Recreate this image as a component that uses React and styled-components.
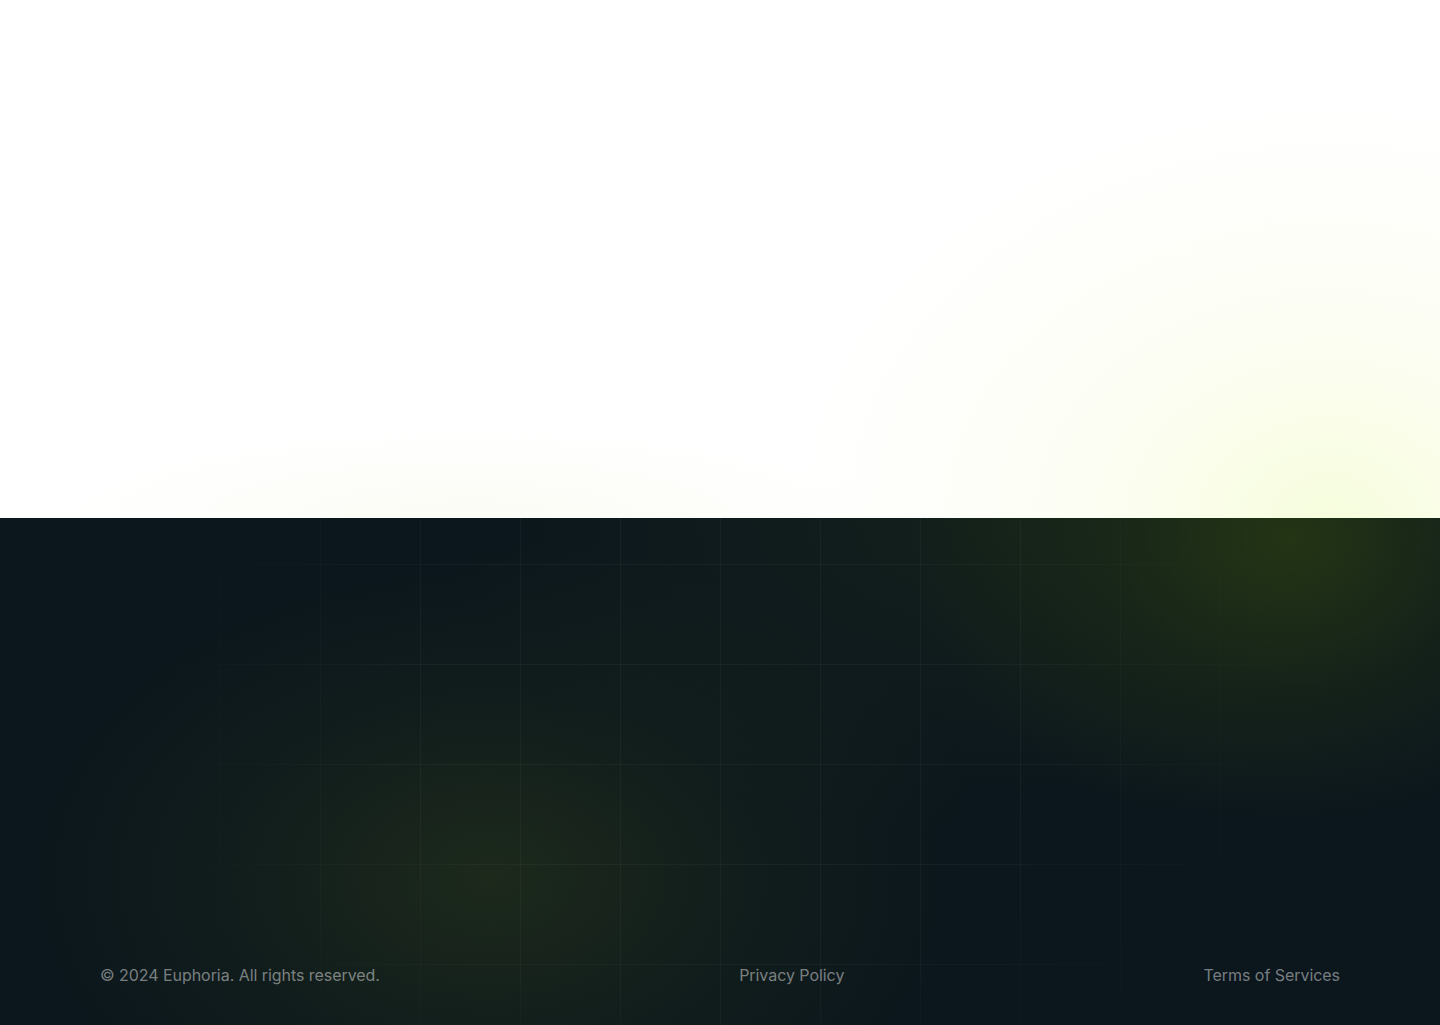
import React from "react";
import styled, { createGlobalStyle } from "styled-components";

const GlobalStyle = createGlobalStyle`
  html, body {
    margin: 0;
    padding: 0;
    background: #ffffff;
  }
  body {
    font-family: "Inter", "Liberation Sans", Arial, sans-serif;
    -webkit-font-smoothing: antialiased;
  }
`;

const Hero = styled.section`
  height: 518px;
  background:
    radial-gradient(ellipse 540px 420px at 1330px 520px, rgba(244, 252, 212, 0.8) 0%, rgba(248, 253, 226, 0.4) 45%, rgba(255, 255, 255, 0) 100%),
    radial-gradient(ellipse 420px 90px at 470px 518px, rgba(248, 250, 236, 0.55) 0%, rgba(255, 255, 255, 0) 100%),
    #ffffff;
`;

const FooterWrap = styled.footer`
  position: relative;
  height: 507px;
  display: flex;
  flex-direction: column;
  justify-content: flex-end;
  overflow: hidden;
  background:
    radial-gradient(ellipse 380px 300px at 1290px 20px, rgba(50, 70, 16, 0.6) 0%, rgba(40, 58, 18, 0.3) 50%, rgba(12, 22, 29, 0) 100%),
    radial-gradient(ellipse 500px 340px at 490px 360px, rgba(40, 54, 26, 0.6) 0%, rgba(30, 44, 24, 0.28) 55%, rgba(12, 22, 29, 0) 100%),
    radial-gradient(ellipse 560px 320px at 1000px 0px, rgba(30, 46, 24, 0.4) 0%, rgba(12, 22, 29, 0) 100%),
    #0b161d;
`;

const Grid = styled.div`
  position: absolute;
  inset: 0;
  pointer-events: none;
  background-image:
    linear-gradient(to right, rgba(255, 255, 255, 0.035) 1px, transparent 1px),
    linear-gradient(to bottom, rgba(255, 255, 255, 0.035) 1px, transparent 1px);
  background-size: 100px 100px;
  background-position: 20px 46px;
  mask-image: radial-gradient(ellipse 620px 480px at 720px 200px, #000 50%, transparent 100%);
  -webkit-mask-image: radial-gradient(ellipse 620px 480px at 720px 200px, #000 50%, transparent 100%);
`;

const BottomBar = styled.div`
  position: relative;
  display: flex;
  justify-content: space-between;
  align-items: center;
  padding: 0 100px 38px;
`;

const FooterText = styled.span`
  font-size: 16px;
  line-height: 24px;
  letter-spacing: -0.05px;
  color: rgba(255, 255, 255, 0.45);
`;

const FooterLink = styled.a`
  font-size: 16px;
  line-height: 24px;
  letter-spacing: -0.05px;
  color: rgba(255, 255, 255, 0.45);
  text-decoration: none;
  cursor: pointer;
  &:hover {
    color: rgba(255, 255, 255, 0.7);
  }
`;

const App = () => {
  return (
    <>
      <GlobalStyle />
      <Hero />
      <FooterWrap>
        <Grid />
        <BottomBar>
          <FooterText>© 2024 Euphoria. All rights reserved.</FooterText>
          <FooterLink href="#">Privacy Policy</FooterLink>
          <FooterLink href="#">Terms of Services</FooterLink>
        </BottomBar>
      </FooterWrap>
    </>
  );
};

export default App;
